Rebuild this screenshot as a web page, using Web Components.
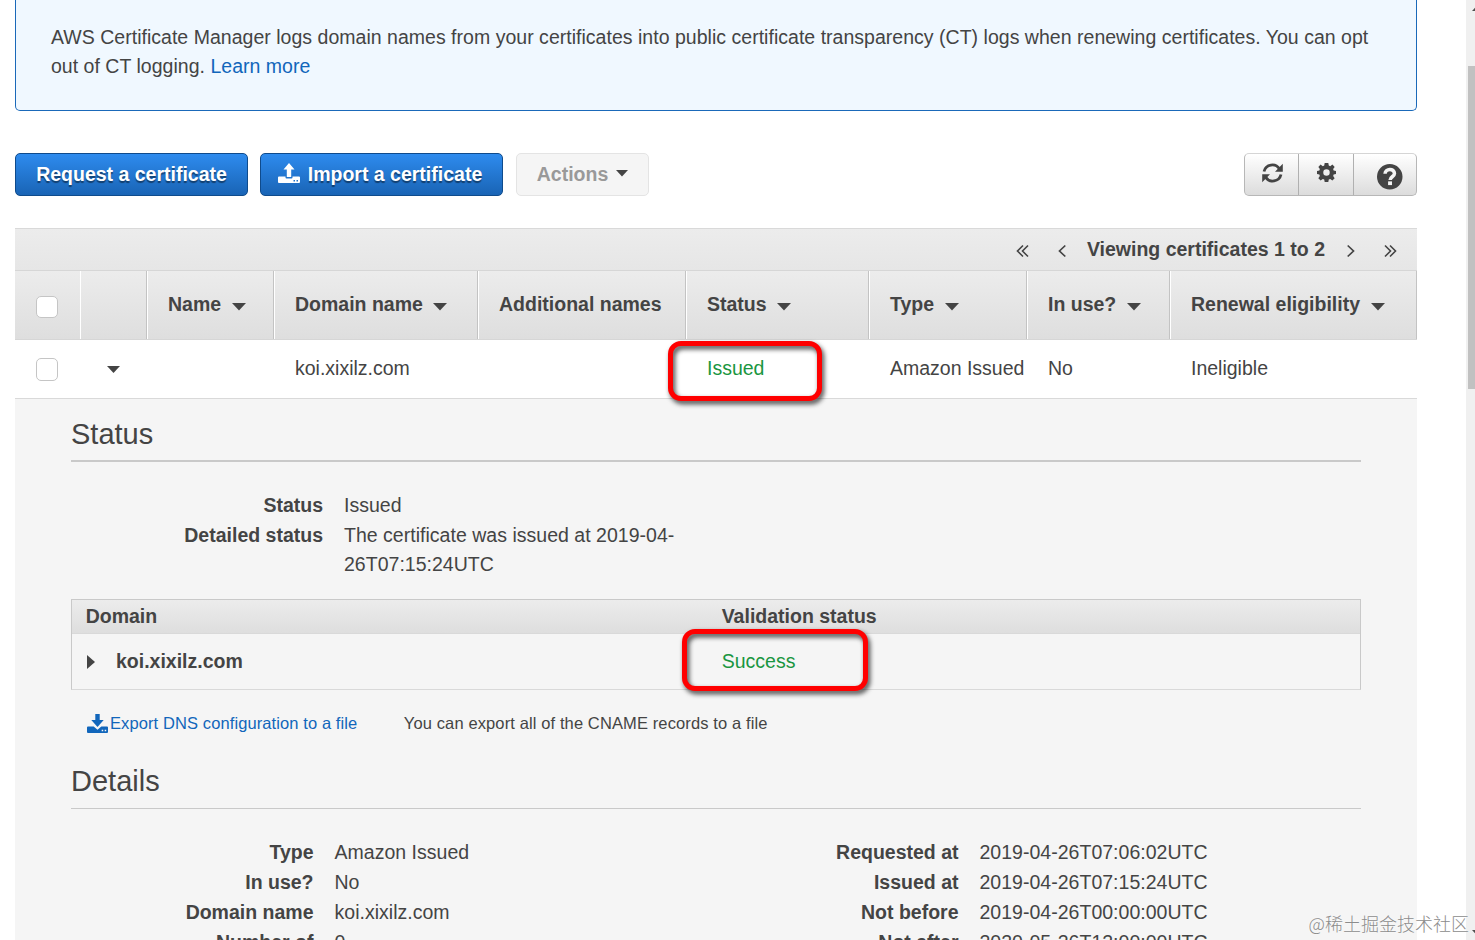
<!DOCTYPE html>
<html lang="en">
<head>
<meta charset="utf-8">
<title>AWS Certificate Manager</title>
<style>
    html, body {
        margin: 0;
        height: 940px;
        overflow: hidden;
        background: #fff;
    }
    body {
        font: 19.5px/29px "Liberation Sans", Arial, sans-serif;
        color: #444;
    }
</style>
</head>
<body>
<acm-page></acm-page>
<script>
// Icon name -> [viewBox width, viewBox height, markup]
const icons = {
    caret: [14, 7.5, '<path d="M0 0h14L7 7.5z" fill="currentColor"/>'],
    caretRight: [8, 14, '<path d="M0 0v14l8-7z" fill="currentColor"/>'],
    prev: [8, 12, '<path d="M7.3 .5L1.5 6l5.8 5.5" fill="none" stroke="currentColor" stroke-width="1.7"/>'],
    next: [8, 12, '<path d="M.7 .5L6.5 6 .7 11.500" fill="none" stroke="currentColor" stroke-width="1.7"/>'],
    first: [13, 12, '<path d="M7 .5L1.5 6 7 11.500M12 .5L6.5 6l5.5 5.500" fill="none" stroke="currentColor" stroke-width="1.6"/>'],
    last: [13, 12, '<path d="M1 .5L6.5 6 1 11.500M6 .5L11.5 6 6 11.500" fill="none" stroke="currentColor" stroke-width="1.6"/>'],
    upload: [22, 20, '<path d="M11 0l5.500 6.500h-3.300V14H8.800V6.500H5.500z" fill="currentColor"/><path d="M1 13.500h6.500v1q0 1 1 1h5q1 0 1-1v-1H21q1 0 1 1V19q0 1-1 1H1q-1 0-1-1v-4.500q0-1 1-1zM15.500 17v1.500H17V17zM18.500 17v1.500H20V17z" fill="currentColor" fill-rule="evenodd"/>'],
    download: [21, 19, '<path d="M8.300 0h4.400v6h4l-6.200 7-6.200-7h4z" fill="currentColor"/><path d="M1 12.500h5.700l3.800 3.300 3.800-3.300H20q1 0 1 1V18q0 1-1 1H1q-1 0-1-1v-4.500q0-1 1-1zM14.700 15.800v1.500h1.500v-1.500zM17.700 15.800v1.500h1.500v-1.500z" fill="currentColor" fill-rule="evenodd"/>'],
    refresh: [21, 20, '<path d="M2 8.500A8.500 8.500 0 0 1 17.500 6M19 11.500A8.500 8.500 0 0 1 3.500 14" fill="none" stroke="currentColor" stroke-width="2.800"/><path d="M20.800 .8v8H13zM.2 19.200v-8H8z" fill="currentColor"/>'],
    gear: [20, 20, '<path d="M8.100 0h3.800l.5 2.700 1.500.6 2.300-1.700 2.400 2.500-1.600 2.300.5 1.500 2.500.5v3.300l-2.500.5-.5 1.500 1.600 2.300-2.400 2.500-2.300-1.600-1.500.5-.5 2.600H8.100l-.5-2.600-1.500-.5-2.300 1.600-2.400-2.500 1.600-2.300-.5-1.500L0 11.700V8.400l2.500-.5.500-1.500-1.600-2.300 2.400-2.500 2.300 1.700 1.500-.6zM10 6.600a3.400 3.400 0 1 0 0 6.800 3.400 3.400 0 1 0 0-6.800z" fill="currentColor" fill-rule="evenodd"/>'],
    help: [26, 26, '<circle cx="13" cy="13" r="13" fill="currentColor"/><path d="M8.200 10C8.400 4.200 17.800 4.200 17.800 9.700c0 3.300-4.400 3.300-4.400 6.500" fill="none" stroke="#f4f4f4" stroke-width="3.600"/><path d="M11.300 17.700h4v3.800h-4z" fill="#f4f4f4"/>'],
};

class AcmIcon extends HTMLElement {
    connectedCallback() {
        const [w, h, markup] = icons[this.getAttribute("name")];
        const width = this.getAttribute("width") || w;
        this.attachShadow({ mode: "open" }).innerHTML = `
            <style>
                :host { display: inline-block; flex: none; line-height: 0; }
                svg { display: block; overflow: visible; }
            </style>
            <svg width="${width}" height="${width * h / w}" viewBox="0 0 ${w} ${h}">${markup}</svg>
        `;
    }
}

class AcmAlert extends HTMLElement {
    constructor() {
        super();
        this.attachShadow({ mode: "open" }).innerHTML = `
            <style>
                :host {
                    display: block;
                    box-sizing: border-box;
                    height: 111px;
                    padding: 23px 35px 0;
                    background: #f0f8ff;
                    border: 1px solid #1a69b9;
                    border-top: 0;
                    border-radius: 0 0 5px 5px;
                    letter-spacing: 0.022px;
                }
            </style>
            <slot></slot>
        `;
    }
}

class AcmButton extends HTMLElement {
    constructor() {
        super();
        this.attachShadow({ mode: "open" }).innerHTML = `
            <style>
                :host {
                    display: flex;
                    box-sizing: border-box;
                    height: 43px;
                    padding: 0 0 1px;
                    align-items: center;
                    justify-content: center;
                    gap: 8px;
                    border: 1px solid #0f4b8c;
                    border-radius: 5px;
                    background: linear-gradient(#2e8bee, #1964b5);
                    color: #fff;
                    font-weight: bold;
                    white-space: nowrap;
                    text-shadow: 0 2px 1px rgba(0, 0, 0, 0.45);
                }
                :host([disabled]) {
                    background: #f5f5f5;
                    border-color: #e4e4e4;
                    color: #999;
                    text-shadow: none;
                }
            </style>
            <slot></slot>
        `;
    }
}

class AcmToolbar extends HTMLElement {
    constructor() {
        super();
        this.attachShadow({ mode: "open" }).innerHTML = `
            <style>
                :host { display: flex; margin-top: 42px; }
                .request { width: 233px; margin-right: 12px; }
                .import { width: 243px; margin-right: 13px; padding-right: 3px; }
                .import acm-icon { margin-top: -2px; }
                .actions { width: 133px; }
                .actions acm-icon { color: #444; margin-top: -2px; }
                .group {
                    display: flex;
                    box-sizing: border-box;
                    width: 173px;
                    height: 43px;
                    margin-left: auto;
                    border: 1px solid #b7b7b7;
                    border-top-color: #d5d5d5;
                    border-radius: 5px;
                    background: linear-gradient(#fff, #dcdcdc);
                }
                .group span {
                    display: flex;
                    box-sizing: border-box;
                    width: 55px;
                    padding-top: 9px;
                    justify-content: center;
                    border-right: 1px solid #b0b0b0;
                }
                .group span:first-child { width: 54px; padding-left: 2px; }
                .group span:last-child { width: 62px; border: 0; padding: 10px 0 0 10px; }
            </style>
            <acm-button class="request">Request a certificate</acm-button>
            <acm-button class="import"><acm-icon name="upload"></acm-icon>Import a certificate</acm-button>
            <acm-button class="actions" disabled>Actions <acm-icon name="caret" width="12"></acm-icon></acm-button>
            <div class="group">
                <span><acm-icon name="refresh"></acm-icon></span>
                <span><acm-icon name="gear" width="19"></acm-icon></span>
                <span><acm-icon name="help" width="25.500"></acm-icon></span>
            </div>
        `;
    }
}

// Red hand-drawn style frame laid over a value
class AcmMark extends HTMLElement {
    constructor() {
        super();
        this.attachShadow({ mode: "open" }).innerHTML = `
            <style>
                :host {
                    position: absolute;
                    box-sizing: border-box;
                    border: 5px solid #f00;
                    border-radius: 13px;
                    filter: drop-shadow(2px 3px 2.500px rgba(0, 0, 0, 0.75));
                    z-index: 2;
                }
            </style>
        `;
    }
}

class AcmCertificates extends HTMLElement {
    constructor() {
        super();
        const columns = ["Name", "Domain name", "Additional names", "Status", "Type", "In use?", "Renewal eligibility"];
        const heads = columns.map((name) => `
            <div>${name}${name === "Additional names" ? "" : '<acm-icon name="caret"></acm-icon>'}</div>
        `).join("");

        this.attachShadow({ mode: "open" }).innerHTML = `
            <style>
                :host { display: block; margin-top: 32px; }
                .pager {
                    display: flex;
                    box-sizing: border-box;
                    height: 42px;
                    padding: 3px 20px 0 0;
                    align-items: center;
                    justify-content: flex-end;
                    border-top: 1px solid #d9d9d9;
                    background: linear-gradient(#ececec, #e6e6e6);
                    font-weight: bold;
                }
                .pager b { margin: -3px 22px 0 21px; }
                .head, .row {
                    display: grid;
                    grid-template-columns: 65px 67px 127px 204px 208px 183px 158px 143px 247px;
                    box-sizing: border-box;
                }
                .head {
                    height: 70px;
                    border-top: 1px solid #d6d6d6;
                    border-bottom: 1px solid #d6d6d6;
                    background: linear-gradient(#ececec, #dedede);
                    font-weight: bold;
                }
                .head div {
                    display: flex;
                    padding: 19px 0 0 20px;
                    border-left: 1px solid #fff;
                    border-right: 1px solid #c3c3c3;
                    white-space: nowrap;
                }
                .head div:first-child { border: 0; padding-left: 21px; }
                .head acm-icon { margin: 13px 0 0 10.500px; }
                .row {
                    height: 59px;
                    border-bottom: 1px solid #d9d9d9;
                }
                .row div { padding: 14px 0 0 21px; white-space: nowrap; position: relative; }
                .row .toggle { padding: 26px 0 0 27px; line-height: 0; }
                .box {
                    display: block;
                    box-sizing: border-box;
                    width: 22px;
                    height: 22px;
                    margin-top: 6px;
                    border: 1px solid #c5c5c5;
                    border-radius: 5px;
                    background: #fff;
                }
                .row .box { height: 23px; margin-top: 4px; }
                .ok { color: #1a9641; }
                acm-mark { left: -18px; top: 1px; width: 154px; height: 60px; }
            </style>
            <div class="pager">
                <acm-icon name="first" style="margin-right: 29px"></acm-icon>
                <acm-icon name="prev"></acm-icon>
                <b>Viewing certificates 1 to 2</b>
                <acm-icon name="next"></acm-icon>
                <acm-icon name="last" style="margin-left: 29px"></acm-icon>
            </div>
            <div class="head"><div><span class="box"></span></div><div></div>${heads}</div>
            <div class="row">
                <div><span class="box"></span></div>
                <div class="toggle"><acm-icon name="caret" width="13"></acm-icon></div>
                <div></div>
                <div>koi.xixilz.com</div>
                <div></div>
                <div class="ok">Issued<acm-mark></acm-mark></div>
                <div>Amazon Issued</div>
                <div>No</div>
                <div>Ineligible</div>
            </div>
        `;
    }
}

class AcmField extends HTMLElement {
    connectedCallback() {
        this.attachShadow({ mode: "open" }).innerHTML = `
            <style>
                :host { display: flex; gap: 21px; min-height: 30px; }
                b { flex: none; width: var(--label-width); text-align: right; }
                span { width: 345px; letter-spacing: 0.02px; }
            </style>
            <b>${this.getAttribute("label")}</b>
            <span><slot></slot></span>
        `;
    }
}

class AcmDomains extends HTMLElement {
    constructor() {
        super();
        this.attachShadow({ mode: "open" }).innerHTML = `
            <style>
                :host {
                    display: block;
                    box-sizing: border-box;
                    height: 91px;
                    border: 1px solid #c9c9c9;
                    border-bottom-color: #d9d9d9;
                }
                div {
                    display: grid;
                    grid-template-columns: 636px 1fr;
                    box-sizing: border-box;
                    padding-left: 13.700px;
                    font-weight: bold;
                }
                .head {
                    height: 34px;
                    padding-top: 2px;
                    border-bottom: 1px solid #d9d9d9;
                    background: linear-gradient(#ececec, #dedede);
                }
                .row { padding-top: 13px; }
                .name { display: flex; align-items: center; gap: 21px; }
                .name acm-icon { margin: 0 0 0 1.300px; }
                .ok { color: #1a9641; font-weight: normal; position: relative; }
                acm-mark { left: -39.700px; top: -18px; width: 186px; height: 62px; }
            </style>
            <div class="head"><span>Domain</span><span>Validation status</span></div>
            <div class="row">
                <span class="name"><acm-icon name="caretRight"></acm-icon>koi.xixilz.com</span>
                <span class="ok">Success<acm-mark></acm-mark></span>
            </div>
        `;
    }
}

class AcmDetails extends HTMLElement {
    constructor() {
        super();
        this.attachShadow({ mode: "open" }).innerHTML = `
            <style>
                :host {
                    display: block;
                    height: 541px;
                    padding: 0 56px;
                    background: #f5f5f5;
                }
                h2 {
                    box-sizing: border-box;
                    height: 63px;
                    margin: 0;
                    padding-top: 15px;
                    border-bottom: 2px solid #c9c9c9;
                    font-size: 29px;
                    line-height: 40px;
                    font-weight: normal;
                }
                .status { padding: 29px 0 20px; --label-width: 252px; }
                .export {
                    display: flex;
                    box-sizing: border-box;
                    height: 75px;
                    padding: 19px 0 0 16px;
                    font-size: 16.500px;
                    letter-spacing: 0.1px;
                    color: #1166bb;
                }
                .export acm-icon { margin: 5px 2px 0 0; }
                .export span { margin-left: 46.500px; color: #444; letter-spacing: 0.115px; }
                h2.second { height: 44px; padding-top: 0; border-bottom-width: 1px; line-height: 32px; }
                .details {
                    display: grid;
                    grid-template-columns: 645px 1fr;
                    padding-top: 29px;
                    --label-width: 242.500px;
                }
            </style>
            <h2>Status</h2>
            <div class="status">
                <acm-field label="Status">Issued</acm-field>
                <acm-field label="Detailed status">The certificate was issued at 2019-04-26T07:15:24UTC</acm-field>
            </div>
            <acm-domains></acm-domains>
            <div class="export">
                <acm-icon name="download"></acm-icon>Export DNS configuration to a file
                <span>You can export all of the CNAME records to a file</span>
            </div>
            <h2 class="second">Details</h2>
            <div class="details">
                <div>
                    <acm-field label="Type">Amazon Issued</acm-field>
                    <acm-field label="In use?">No</acm-field>
                    <acm-field label="Domain name">koi.xixilz.com</acm-field>
                    <acm-field label="Number of">0</acm-field>
                </div>
                <div>
                    <acm-field label="Requested at">2019-04-26T07:06:02UTC</acm-field>
                    <acm-field label="Issued at">2019-04-26T07:15:24UTC</acm-field>
                    <acm-field label="Not before">2019-04-26T00:00:00UTC</acm-field>
                    <acm-field label="Not after">2020-05-26T12:00:00UTC</acm-field>
                </div>
            </div>
        `;
    }
}

class AcmScrollbar extends HTMLElement {
    constructor() {
        super();
        this.attachShadow({ mode: "open" }).innerHTML = `
            <style>
                :host {
                    display: flex;
                    flex-direction: column;
                    box-sizing: border-box;
                    width: 9px;
                    padding: 7px 0 6px 2px;
                    background: #f0f0f0;
                    color: #505050;
                    overflow: hidden;
                }
                acm-icon { height: 4px; margin-left: 4px; }
                .up { margin-left: 4px; transform: scaleY(-1); }
                .thumb { height: 323px; margin: 55px 0 auto; background: #c1c1c1; }
            </style>
            <acm-icon class="up" name="caret" width="8"></acm-icon>
            <div class="thumb"></div>
            <acm-icon name="caret" width="8"></acm-icon>
        `;
    }
}

class AcmPage extends HTMLElement {
    constructor() {
        super();
        this.attachShadow({ mode: "open" }).innerHTML = `
            <style>
                :host { display: flex; width: 1475px; height: 940px; overflow: hidden; position: relative; }
                main { width: 1402px; margin: 0 49px 0 15px; }
                a { color: #1166bb; text-decoration: none; }
                .watermark {
                    position: absolute;
                    right: 6px;
                    bottom: 4px;
                    font: 300 18px/26px "Noto Sans CJK SC", sans-serif;
                    color: #8c8c8c;
                    text-shadow: 0 0 2px #fff;
                    white-space: nowrap;
                }
            </style>
            <main>
                <acm-alert>AWS Certificate Manager logs domain names from your certificates into public certificate transparency (CT) logs when renewing certificates. You can opt out of CT logging. <a>Learn more</a></acm-alert>
                <acm-toolbar></acm-toolbar>
                <acm-certificates></acm-certificates>
                <acm-details></acm-details>
            </main>
            <acm-scrollbar></acm-scrollbar>
            <div class="watermark">@稀土掘金技术社区</div>
        `;
    }
}

customElements.define("acm-icon", AcmIcon);
customElements.define("acm-alert", AcmAlert);
customElements.define("acm-button", AcmButton);
customElements.define("acm-toolbar", AcmToolbar);
customElements.define("acm-mark", AcmMark);
customElements.define("acm-certificates", AcmCertificates);
customElements.define("acm-field", AcmField);
customElements.define("acm-domains", AcmDomains);
customElements.define("acm-details", AcmDetails);
customElements.define("acm-scrollbar", AcmScrollbar);
customElements.define("acm-page", AcmPage);
</script>
</body>
</html>
